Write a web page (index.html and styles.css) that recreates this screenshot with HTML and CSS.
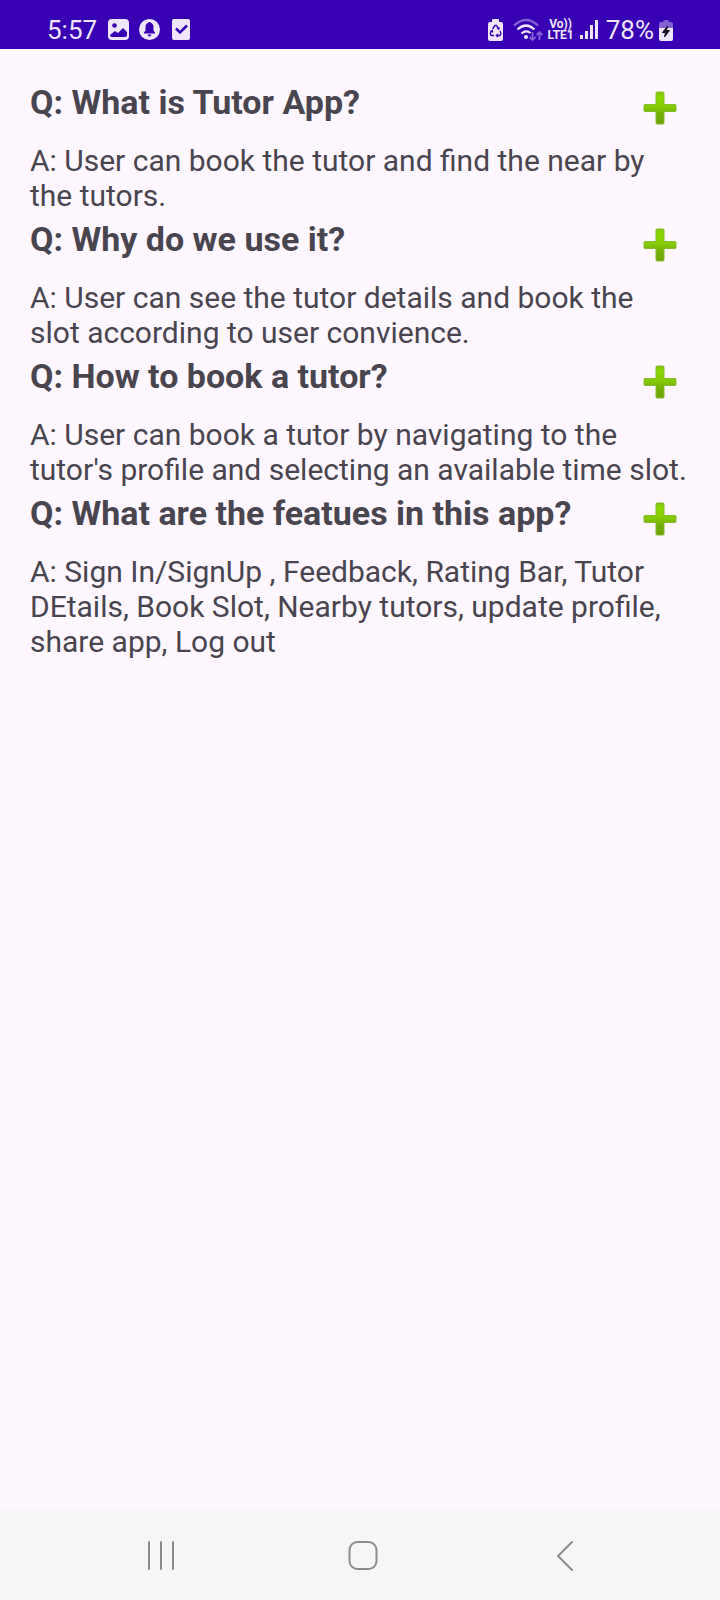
FILE: index.html
```html
<!DOCTYPE html>
<html lang="en">
<head>
<meta charset="utf-8">
<meta name="viewport" content="width=device-width, initial-scale=1">
<title>Tutor App FAQ</title>
<link rel="stylesheet" href="styles.css">
</head>
<body>
<svg class="defs" aria-hidden="true">
  <defs>
    <linearGradient id="green" x1="0" y1="0" x2="0" y2="1">
      <stop offset="0" stop-color="#84c40a"/>
      <stop offset="0.15" stop-color="#8ad800"/>
      <stop offset="0.45" stop-color="#86cc04"/>
      <stop offset="0.7" stop-color="#72ad08"/>
      <stop offset="1" stop-color="#6ca406"/>
    </linearGradient>
    <symbol id="plus" viewBox="0 0 34 34">
      <path d="M14 1h6q1 0 1 1v11.500h11q1 0 1 1v5q0 1-1 1H21V32q0 1-1 1h-6q-1 0-1-1V20.500H2q-1 0-1-1v-5q0-1 1-1h11V2q0-1 1-1z" fill="url(#green)" stroke="#83bb2c" stroke-width="1"/>
    </symbol>
  </defs>
</svg>
<div class="screen">
  <header class="status">
    <div class="status-group">
      <span class="status-text">5:57</span>
      <svg class="status-left-icons" width="84" height="24" viewBox="0 0 84 24" fill="#efe5fd">
        <rect x="1" y="1" width="21" height="21" rx="4"/>
        <circle cx="7.500" cy="7.500" r="2.300" fill="#3700b3"/>
        <path d="M3 17l5-4 3 2 5-5 4 4v3q0 2-2 2H5q-2 0-2-2z" fill="#3700b3"/>
        <circle cx="42.500" cy="11.500" r="10.500"/>
        <path d="M37 15.500v-1l1.500-2V9q0-3.500 3-4.200V4h2v.8q3 .7 3 4.200v3.500l1.500 2v1zM40.500 16.500h4q-.5 2-2 2t-2-2z" fill="#3700b3"/>
        <rect x="65" y="1" width="18" height="21" rx="2"/>
        <path d="M69 10.500l4 4 7-7" fill="none" stroke="#3700b3" stroke-width="2.500"/>
      </svg>
    </div>
    <div class="status-group status-right">
      <svg width="15" height="22" viewBox="0 0 15 22">
        <path d="M4 3V1q0-1 1-1h5q1 0 1 1v2h2q2 0 2 2v15q0 2-2 2H2q-2 0-2-2V5q0-2 2-2z" fill="#efe5fd"/>
        <path d="M4.500 10L7 6.500h1.500L10.500 10M12 12l1 2.500-1 2H8.500M6 16.500H3.200L2.200 14.500 4 11.500M9 8.800l1.700 1.400.5-2M10 15l-1.700 1.500L10 18M2.200 12.300l2-.8.6 2" fill="none" stroke="#3700b3" stroke-width="1.300"/>
      </svg>
      <svg class="wifi" width="30" height="24" viewBox="0 0 30 24" fill="none" stroke-width="2.200">
        <path d="M1 7.500Q13 -3.500 25 7.500" stroke="#8360d3"/>
        <path d="M4.500 11.500Q13 3.500 21.500 11.500M8.500 15.500Q13 11.500 17.500 15" stroke="#efe5fd"/>
        <circle cx="13" cy="19" r="2" fill="#efe5fd"/>
        <path d="M19.500 14v8m-3-3l3 3 3-3M26.500 22v-8m-3 3l3-3 3 3" stroke="#8360d3" stroke-width="1.800"/>
      </svg>
      <span class="volte"><span>Vo))</span><span>LTE1</span></span>
      <svg class="signal" width="18" height="20" viewBox="0 0 18 20" fill="#efe5fd">
        <rect x="0" y="15" width="3" height="4"/><rect x="5" y="11" width="3" height="8"/><rect x="10" y="5" width="3" height="14"/><rect x="15" y="0" width="3" height="19"/>
      </svg>
      <span class="status-text">78%</span>
      <svg class="battery" width="14" height="21" viewBox="0 0 14 21">
        <path d="M4 2q0-2 2-2h2q2 0 2 2h2q2 0 2 2v4H0V4q0-2 2-2z" fill="#8360d3"/>
        <path d="M0 8h14v11q0 2-2 2H2q-2 0-2-2z" fill="#efe5fd"/>
        <path d="M8.500 6L3.500 12.500h3L5.500 17 10.500 10.500H7.500z" fill="#151020" stroke="#151020" stroke-width="1"/>
      </svg>
    </div>
  </header>

  <main class="faq">
    <section class="item">
      <div class="question"><h2>Q: What is Tutor App?</h2><button class="toggle" type="button" aria-label="Toggle answer"><svg width="34" height="34"><use href="#plus"/></svg></button></div>
      <p class="answer">A: User can book the tutor and find the near by the tutors.</p>
    </section>
    <section class="item">
      <div class="question"><h2>Q: Why do we use it?</h2><button class="toggle" type="button" aria-label="Toggle answer"><svg width="34" height="34"><use href="#plus"/></svg></button></div>
      <p class="answer">A: User can see the tutor details and book the slot according to user convience.</p>
    </section>
    <section class="item">
      <div class="question"><h2>Q: How to book a tutor?</h2><button class="toggle" type="button" aria-label="Toggle answer"><svg width="34" height="34"><use href="#plus"/></svg></button></div>
      <p class="answer">A: User can book a tutor by navigating to the tutor's profile and selecting an available time slot.</p>
    </section>
    <section class="item">
      <div class="question"><h2>Q: What are the featues in this app?</h2><button class="toggle" type="button" aria-label="Toggle answer"><svg width="34" height="34"><use href="#plus"/></svg></button></div>
      <p class="answer">A: Sign In/SignUp , Feedback, Rating Bar, Tutor DEtails, Book Slot, Nearby tutors, update profile, share app, Log out</p>
    </section>
  </main>

  <nav class="navbar">
    <button type="button" aria-label="Recent apps"><svg width="32" height="32" viewBox="0 0 32 32"><path d="M4 3v27M16 3v27M28 3v27"/></svg></button>
    <button type="button" aria-label="Home"><svg width="32" height="32" viewBox="0 0 32 32"><rect x="2.500" y="3" width="27" height="27" rx="8"/></svg></button>
    <button type="button" aria-label="Back"><svg width="32" height="32" viewBox="0 0 32 32"><path d="M23 3L9 17l14 14"/></svg></button>
  </nav>
</div>
</body>
</html>
```
FILE: styles.css
```css
* {
  box-sizing: border-box;
}

body {
  margin: 0;
  background: #fef7ff;
  color: #49454f;
  font-family: Roboto, "Noto Sans", sans-serif;
}

.defs {
  position: absolute;
  width: 0;
  height: 0;
}

.screen {
  display: flex;
  flex-direction: column;
  min-height: 100vh;
}

.status {
  display: flex;
  justify-content: space-between;
  align-items: flex-end;
  height: 49px;
  padding: 0 47px 7px 47px;
  background: #3700b3;
  color: #efe5fd;
}

.status-group {
  display: flex;
  align-items: center;
  height: 24px;
}

.status-left-icons {
  margin-left: 10px;
}

.status-text {
  font-size: 26px;
  line-height: 24px;
}

.wifi {
  margin-left: 10px;
}

.volte {
  display: flex;
  flex-direction: column;
  align-items: center;
  margin: 0 6px 0 4px;
  font-size: 12px;
  font-weight: 700;
  line-height: 11px;
}

.signal {
  margin-right: 8px;
}

.battery {
  margin-left: 5px;
}

.faq {
  flex: 1;
  padding: 27px 30px;
}

.question {
  display: flex;
  justify-content: space-between;
  align-items: flex-start;
  height: 67px;
}

.question h2 {
  margin: 0;
  padding-top: 6px;
  font-size: 34px;
  font-weight: 700;
  line-height: 40px;
}

.toggle {
  display: flex;
  align-items: center;
  justify-content: center;
  width: 60px;
  height: 64px;
  padding: 0;
  border: 0;
  background: none;
}

.answer {
  margin: 0;
  font-size: 30px;
  line-height: 35px;
}

.navbar {
  display: flex;
  justify-content: space-between;
  align-items: center;
  height: 90px;
  padding: 0 139px 0 145px;
  background: #f6f6f6;
}

.navbar button {
  display: flex;
  padding: 0;
  border: 0;
  background: none;
}

.navbar svg {
  fill: none;
  stroke: #8c8c8c;
  stroke-width: 2;
  stroke-linecap: round;
  stroke-linejoin: round;
}
```
